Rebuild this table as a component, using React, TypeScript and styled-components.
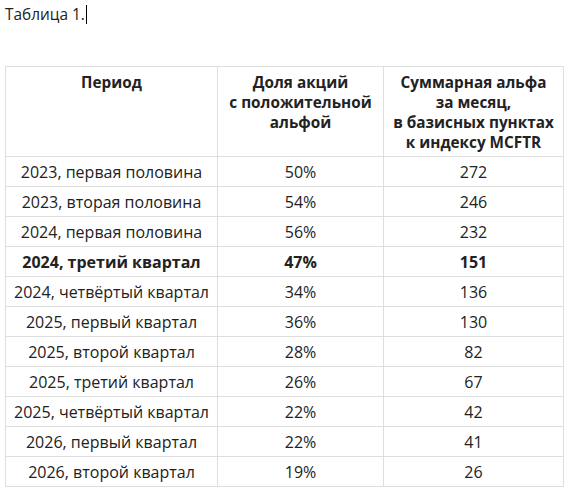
import React from "react";
import styled, { createGlobalStyle } from "styled-components";

const GlobalStyle = createGlobalStyle`
  body {
    margin: 0;
    background: #ffffff;
    font-family: "Open Sans", "Noto Sans", sans-serif;
    color: #222222;
  }
`;

type Row = {
  period: string;
  share: string;
  alpha: string;
  bold?: boolean;
};

const rows: Row[] = [
  { period: "2023, первая половина", share: "50%", alpha: "272" },
  { period: "2023, вторая половина", share: "54%", alpha: "246" },
  { period: "2024, первая половина", share: "56%", alpha: "232" },
  { period: "2024, третий квартал", share: "47%", alpha: "151", bold: true },
  { period: "2024, четвёртый квартал", share: "34%", alpha: "136" },
  { period: "2025, первый квартал", share: "36%", alpha: "130" },
  { period: "2025, второй квартал", share: "28%", alpha: "82" },
  { period: "2025, третий квартал", share: "26%", alpha: "67" },
  { period: "2025, четвёртый квартал", share: "22%", alpha: "42" },
  { period: "2026, первый квартал", share: "22%", alpha: "41" },
  { period: "2026, второй квартал", share: "19%", alpha: "26" },
];

const App = () => {
  return (
    <>
      <GlobalStyle />
      <Page>
        <Caption>
          Таблица 1.<Cursor />
        </Caption>
        <Table>
          <colgroup>
            <col style={{ width: 212 }} />
            <col style={{ width: 166 }} />
            <col style={{ width: 180 }} />
          </colgroup>
          <thead>
            <tr>
              <HeadCell>Период</HeadCell>
              <HeadCell>
                Доля акций
                <br />с положительной
                <br />
                альфой
              </HeadCell>
              <HeadCell>
                Суммарная альфа
                <br />
                за месяц,
                <br />в базисных пунктах
                <br />к индексу MCFTR
              </HeadCell>
            </tr>
          </thead>
          <tbody>
            {rows.map((r) => (
              <tr key={r.period}>
                <Cell $bold={r.bold}>{r.period}</Cell>
                <Cell $bold={r.bold}>{r.share}</Cell>
                <Cell $bold={r.bold}>{r.alpha}</Cell>
              </tr>
            ))}
          </tbody>
        </Table>
      </Page>
    </>
  );
};

const Page = styled.div`
  padding: 0 5px;
`;

const Caption = styled.p`
  margin: 0;
  padding-top: 4px;
  font-size: 15.4px;
  line-height: 21px;
  display: flex;
  align-items: center;
  height: 21px;
`;

const Cursor = styled.span`
  display: inline-block;
  width: 1px;
  height: 19px;
  margin-left: 1px;
  background: #000000;
`;

const Table = styled.table`
  margin-top: 41px;
  width: 558px;
  table-layout: fixed;
  border-collapse: collapse;
  line-height: 20px;
`;

const HeadCell = styled.th`
  border: 1px solid #dedede;
  padding: 5px 6px 4px;
  text-align: center;
  vertical-align: top;
  font-size: 15.3px;
  font-weight: 700;
  height: 80px;
`;

const Cell = styled.td<{ $bold?: boolean }>`
  border: 1px solid #dedede;
  padding: 5px 6px 4px;
  text-align: center;
  font-size: 16px;
  font-weight: ${(p) => (p.$bold ? 700 : 400)};
  white-space: nowrap;
`;

export default App;
